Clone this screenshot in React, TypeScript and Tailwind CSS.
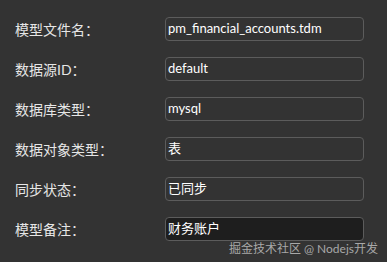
export default function App() {
  const rows = [
    { label: "模型文件名：", value: "pm_financial_accounts.tdm" },
    { label: "数据源ID：", value: "default" },
    { label: "数据库类型：", value: "mysql" },
    { label: "数据对象类型：", value: "表" },
    { label: "同步状态：", value: "已同步" },
    { label: "模型备注：", value: "财务账户", focused: true },
  ];

  return (
    <div
      className="relative w-[387px] h-[262px] bg-[#333333] overflow-hidden pt-[17px]"
      style={{ fontFamily: 'Lato, "Noto Sans CJK SC", sans-serif' }}
    >
      <div className="flex flex-col gap-4">
        {rows.map((row) => (
          <div key={row.label} className="flex items-center">
            <div className="w-[165px] pl-[15px] text-[14px] text-[#e6e6e6]">{row.label}</div>
            <div
              className={`w-[199px] h-[24px] flex items-center pl-[2px] rounded-[4px] border border-[#5c5c5c] text-[13px] text-white ${
                row.focused ? "bg-[#1e1e1e]" : "bg-[#333333]"
              }`}
            >
              {row.value}
            </div>
          </div>
        ))}
      </div>
      <div className="absolute right-[9px] top-[241px] text-[12px] text-[#a8a8a8] leading-[16px]">
        掘金技术社区 @ Nodejs开发
      </div>
    </div>
  );
}
